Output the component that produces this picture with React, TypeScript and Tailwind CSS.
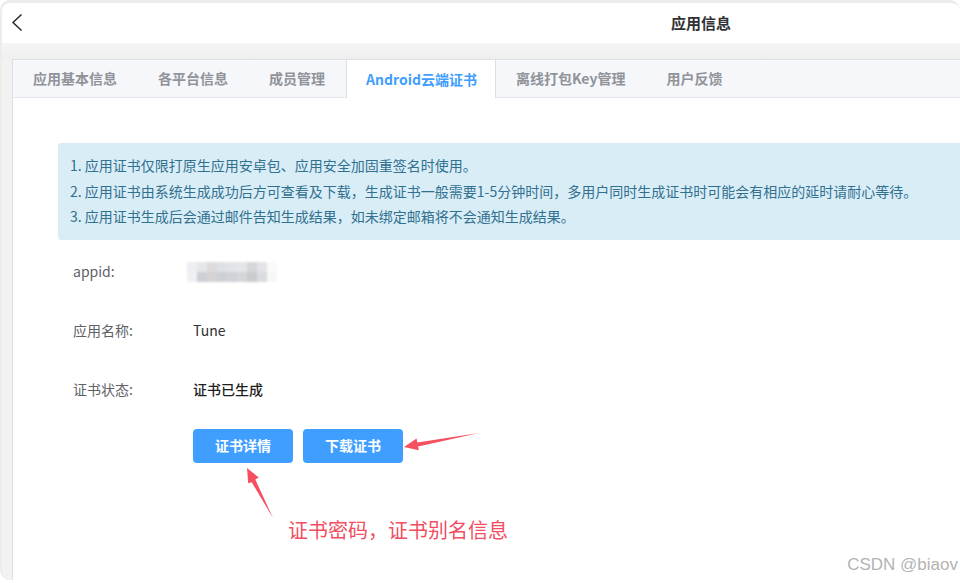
import React from "react";

const tabs = ["应用基本信息", "各平台信息", "成员管理", "Android云端证书", "离线打包Key管理", "用户反馈"];
const activeTab = 3;

const notes = [
  "1. 应用证书仅限打原生应用安卓包、应用安全加固重签名时使用。",
  "2. 应用证书由系统生成成功后方可查看及下载，生成证书一般需要1-5分钟时间，多用户同时生成证书时可能会有相应的延时请耐心等待。",
  "3. 应用证书生成后会通过邮件告知生成结果，如未绑定邮箱将不会通知生成结果。",
];

// pixelated blur that hides the appid
const blurTop = ["#eceef1", "#e6e7ea", "#dcdada", "#dfe1e5", "#e2e4e7", "#e4e5e8", "#d6d7db", "#e3e4e7", "#fafafa"];
const blurBottom = ["#eef0f2", "#ccd0d6", "#d6d3d2", "#cdd1d6", "#d0d2d6", "#d4d6d9", "#c9cccf", "#d9dbdf", "#f7f7f7"];

function Row({ label, children }: { label: string; children: React.ReactNode }) {
  return (
    <div className="flex items-center h-[40px] text-[14px]">
      <div className="w-[180px] pl-[60px] shrink-0 text-[#606266] whitespace-nowrap">{label}</div>
      <div className="text-[#303133]">{children}</div>
    </div>
  );
}

export default function App() {
  return (
    <div className="w-[960px] h-[583px] bg-white overflow-hidden relative font-['Noto_Sans_CJK_SC','Noto_Sans',sans-serif]">
      <div className="h-[580px] flex flex-col rounded-l-[10px] rounded-tr-[10px] bg-[#f2f2f2] border-l-2 border-t-[3px] border-[#ececec] overflow-hidden">
        {/* header */}
        <div className="h-[40px] shrink-0 bg-white rounded-tl-[8px] flex items-center">
          <svg className="ml-[9px] w-[12px] h-[20px]" viewBox="0 0 12 20" fill="none">
            <path d="M10.5 1.5 L2 9.5 L10.5 17.5" stroke="#2b2b2b" strokeWidth="1.5" />
          </svg>
          <span className="ml-[648px] text-[15px] font-bold text-[#303133]">应用信息</span>
        </div>
        <div className="h-[16px] shrink-0 bg-gradient-to-b from-[#f5f5f5] to-[#efefef]" />

        {/* tab card */}
        <div className="flex-1 ml-[10px] bg-white border-l border-t border-[#dcdfe6] flex flex-col">
          <div className="h-[38px] shrink-0 flex bg-[#f5f7fa]">
            {tabs.map((t, i) =>
              i === activeTab ? (
                <div key={t} className="h-full flex items-center pl-[19px] pr-[18px] bg-white border-x border-[#dcdfe6] text-[14px] font-semibold text-[#409eff] whitespace-nowrap">
                  {t}
                </div>
              ) : (
                <div key={t} className="h-full flex items-center pl-[20px] pr-[21px] border-b border-[#e4e7ed] text-[14px] font-semibold text-[#909399] whitespace-nowrap">
                  {t}
                </div>
              )
            )}
            <div className="flex-1 border-b border-[#e4e7ed]" />
          </div>

          <div className="flex-1 flex flex-col">
            <div className="mt-[45px] ml-[45px] bg-[#d9edf7] rounded-l-[3px] py-[10px] pl-[12px] text-[14px] leading-[25.5px] text-[#31708f] whitespace-nowrap">
              {notes.map(n => (
                <div key={n}>{n}</div>
              ))}
            </div>

            <div className="mt-[12px] flex flex-col gap-[19px]">
              <Row label="appid:">
                <div className="grid grid-cols-9 w-[90px] -ml-[6px] blur-[1.2px]">
                  {blurTop.map((c, i) => (
                    <div key={"t" + i} className="h-[10px]" style={{ backgroundColor: c }} />
                  ))}
                  {blurBottom.map((c, i) => (
                    <div key={"b" + i} className="h-[10px]" style={{ backgroundColor: c }} />
                  ))}
                </div>
              </Row>
              <Row label="应用名称:">Tune</Row>
              <Row label="证书状态:">
                <span className="font-medium text-[#1f1f1f]">证书已生成</span>
              </Row>
            </div>

            <div className="mt-[19px] ml-[180px] flex gap-[10px]">
              <button className="w-[100px] h-[34px] rounded-[4px] bg-[#409eff] text-white text-[14px] font-semibold">证书详情</button>
              <button className="w-[100px] h-[34px] rounded-[4px] bg-[#409eff] text-white text-[14px] font-semibold">下载证书</button>
            </div>
          </div>
        </div>
      </div>

      {/* annotations */}
      <svg className="absolute left-0 top-0 pointer-events-none" width="960" height="583">
        <polygon points="404,447 416.6,438.5 417.3,442.4 479,433 418.1,446.4 418.8,450.3" fill="#f5505f" />
        <polygon points="247,468 258.8,477.6 255.3,479.5 273,518 251.7,482.2 248.2,483.2" fill="#f5505f" />
      </svg>
      <div className="absolute left-[288px] top-[516px] text-[20px] leading-[28px] text-[#f24e62]">证书密码，证书别名信息</div>
      <div className="absolute right-[2px] top-[554px] text-[17px] leading-[22px] text-[#b3b3b3] font-['Liberation_Sans',sans-serif]">CSDN @biaov</div>
    </div>
  );
}
